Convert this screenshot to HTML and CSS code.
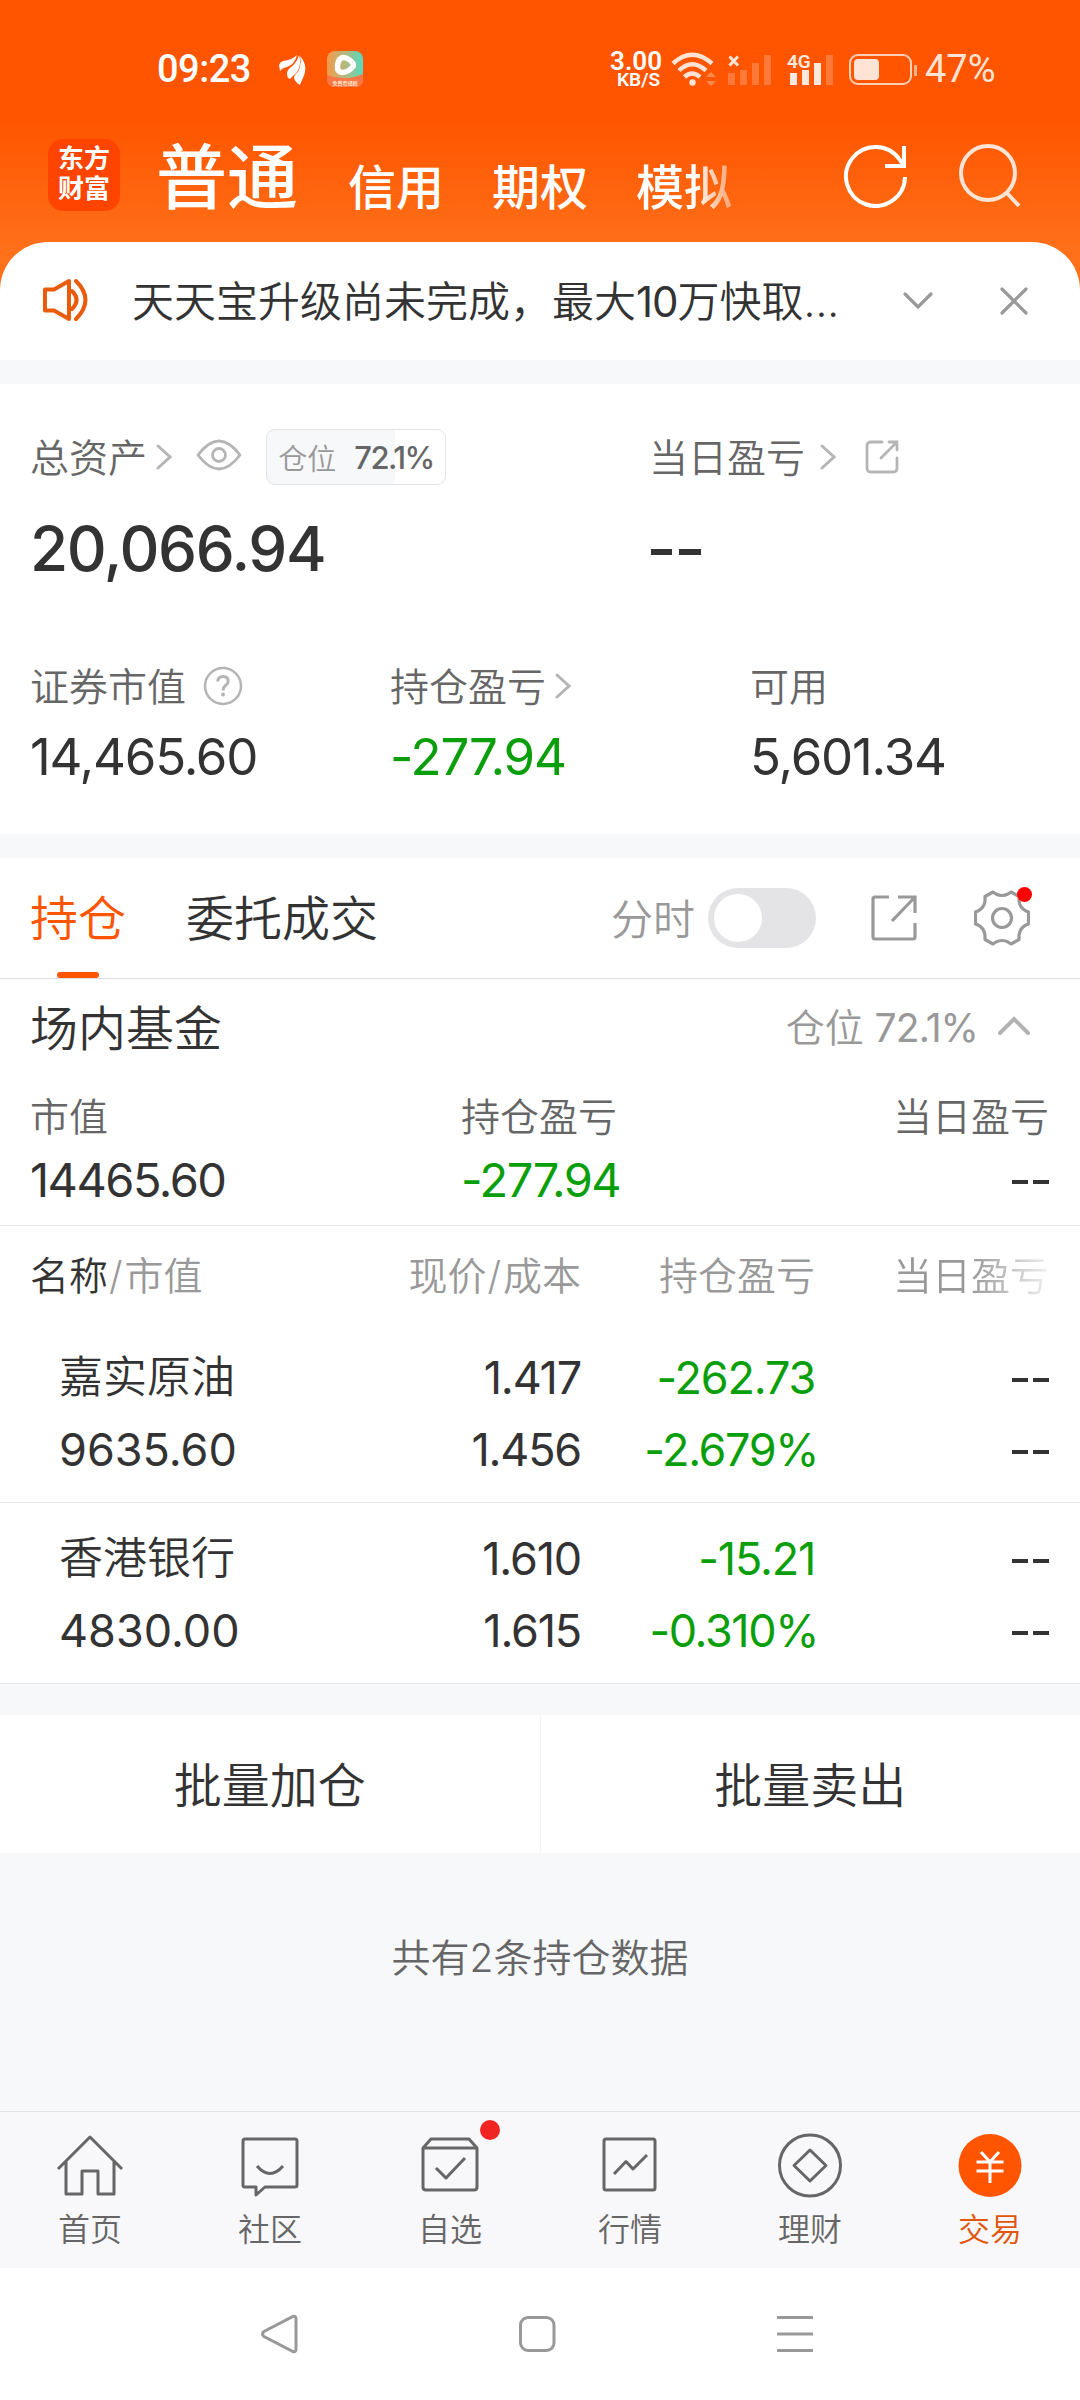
FILE: index.html
```html
<!DOCTYPE html>
<html lang="zh-CN">
<head>
    <meta charset="UTF-8">
    <title>东方财富 - 交易</title>
    <meta name="viewport" content="width=device-width, initial-scale=1.0">
    <link rel="stylesheet" href="styles.css">
</head>
<body>
    <!-- Orange header -->
    <header class="header">
        <div class="status-bar">
            <span class="clock">09:23</span>
            <svg class="wing" width="28" height="32" viewBox="0 0 28 32" fill="#fff">
                <path d="M0 12Q1 9 4 8Q13 7 18 2Q16 11 8 14Q3 15 1 18Z"/>
                <path d="M8 21Q8 17 11 15Q18 10 20 2Q23 12 18 19Q15 22 11 26Q8 25 8 21Z"/>
                <path d="M15 25Q15 22 19 19Q23 12 21 3Q30 13 24 25Q22 29 21 32Q16 29 15 25Z"/>
            </svg>
            <svg class="player" width="36" height="36" viewBox="0 0 36 36">
                <defs>
                    <linearGradient id="play" x1="0" y1="0" x2="1" y2="0">
                        <stop offset="0" stop-color="#f59a4a"/>
                        <stop offset=".5" stop-color="#b3b97e"/>
                        <stop offset="1" stop-color="#55dcc0"/>
                    </linearGradient>
                </defs>
                <rect width="36" height="36" rx="8" fill="url(#play)"/>
                <path d="M0 24Q18 31 36 23V28Q36 36 28 36H8Q0 36 0 28Z" fill="#fb7646"/>
                <path d="M13 8Q16 5 21 8Q28 12 26 15.500Q22 21 15 21.500Q10 21 10.500 15Q11 10 13 8Z" fill="none" stroke="#fff" stroke-width="5.500"/>
                <text x="18" y="34" class="player-text">免费看短剧</text>
            </svg>
            <div class="net-speed"><b>3.00</b><span>KB/S</span></div>
            <svg class="signals" width="240" height="40" viewBox="672 48 240 40">
                <g fill="none" stroke="#ffe4d6" stroke-width="4.500">
                    <path d="M674 62.500Q693 45 713 62.500"/>
                    <path d="M680 69.500Q693 57 707 69.500"/>
                    <path d="M685.500 76Q693 69 701 76"/>
                </g>
                <circle cx="693.500" cy="81.500" r="3.200" fill="#ffe4d6"/>
                <path d="M707 76L712 71L717 76ZM707 80L712 85L717 80Z" fill="#ff8a50"/>
                <path d="M730.500 55.500L739 64.500M739 55.500L730.500 64.500" stroke="#ffe4d6" stroke-width="3"/>
                <path d="M729 72h7v12h-7zM741 69h7v15h-7zM753 62h7v22h-7zM765 54h7v30h-7zM827 54h7v30h-7z" fill="#ff7a39"/>
                <path d="M791 72h7v12h-7zM803 69h7v15h-7zM815 62h7v22h-7z" fill="#ffe9de"/>
                <text x="788" y="67" class="net-type">4G</text>
                <rect x="851" y="54" width="61" height="29" rx="8" fill="none" stroke="#ffcfb5" stroke-width="2"/>
                <rect x="855" y="58" width="25" height="21" rx="4" fill="#ffe4d6"/>
            </svg>
            <i class="battery-tip"></i>
            <span class="battery">47%</span>
        </div>
        <div class="top-nav">
            <div class="logo">东方<br>财富</div>
            <span class="account active">普通</span>
            <span class="account">信用</span>
            <span class="account">期权</span>
            <span class="account fade">模拟</span>
            <svg class="refresh" width="64" height="66" viewBox="0 0 64 66" fill="none" stroke="#fff" stroke-width="4">
                <path d="M61 35A29.500 29.500 0 1 1 56 18L60 24"/>
                <path d="M60 4V24H41"/>
            </svg>
            <svg class="search" width="64" height="66" viewBox="0 0 64 66" fill="none" stroke="#ffe4d6" stroke-width="4">
                <circle cx="30" cy="31" r="27"/>
                <path d="M48 50L61 64"/>
            </svg>
        </div>
    </header>

    <!-- Notice -->
    <div class="notice">
        <svg class="speaker" width="48" height="44" viewBox="0 0 48 44" fill="none" stroke="#ea5b0c" stroke-width="4">
            <path d="M3 11.500H12L27 3V41L12 32.500H3Z" stroke-linejoin="round"/>
            <path d="M30 13Q39 22 30 31M34 3Q53 22 34 41" stroke-linecap="round"/>
        </svg>
        <span class="notice-text">天天宝升级尚未完成，最大<b>10</b>万快取...</span>
        <svg class="notice-down" width="32" height="20" viewBox="0 0 32 20" fill="none" stroke="#999" stroke-width="3.200" stroke-linecap="round">
            <path d="M3 3L16 16L29 3"/>
        </svg>
        <svg width="28" height="28" viewBox="0 0 28 28" fill="none" stroke="#999" stroke-width="3.200" stroke-linecap="round">
            <path d="M2 2L26 26M26 2L2 26"/>
        </svg>
    </div>

    <!-- Assets -->
    <section class="assets">
        <div class="assets-top">
            <div class="asset-main">
                <div class="label">
                    <span>总资产</span>
                    <svg class="arrow" width="16" height="26" viewBox="0 0 16 26"><path d="M2 2L14 13L2 24"/></svg>
                    <svg class="eye" width="46" height="32" viewBox="0 0 46 32" fill="none" stroke="#b5b5b5" stroke-width="2.800">
                        <path d="M2 16Q23 -12 44 16Q23 44 2 16Z" stroke-linejoin="round"/>
                        <circle cx="23" cy="16" r="6.500"/>
                    </svg>
                    <div class="badge">仓位<b>72.1%</b></div>
                </div>
                <div class="total">20,066.94</div>
            </div>
            <div>
                <div class="label">
                    <span>当日盈亏</span>
                    <svg class="arrow wide" width="16" height="26" viewBox="0 0 16 26"><path d="M2 2L14 13L2 24"/></svg>
                    <svg class="share" width="34" height="34" viewBox="0 0 34 34" fill="none" stroke="#b5b5b5" stroke-width="2.800" stroke-linecap="round">
                        <path d="M17 2H6Q2 2 2 6V28Q2 32 6 32H28Q32 32 32 28V18M24 2H32V10M32 2L16 18"/>
                    </svg>
                </div>
                <div class="dash big"></div>
            </div>
        </div>
        <div class="assets-cols">
            <div>
                <div class="label">
                    <span>证券市值</span>
                    <svg class="help" width="40" height="40" viewBox="0 0 40 40" fill="none" stroke="#b5b5b5" stroke-width="2.500">
                        <circle cx="20" cy="20" r="18"/>
                        <path d="M14.800 15.500Q15 10.500 20 10.500Q25.200 10.500 25.200 15Q25.200 17.500 22.500 19.500Q20 21.500 20 24.500" stroke-width="3"/>
                        <circle cx="20" cy="28.500" r="2" fill="#b5b5b5" stroke="none"/>
                    </svg>
                </div>
                <div class="amount">14,465.60</div>
            </div>
            <div>
                <div class="label">
                    <span>持仓盈亏</span>
                    <svg class="arrow" width="16" height="26" viewBox="0 0 16 26"><path d="M2 2L14 13L2 24"/></svg>
                </div>
                <div class="amount green">-277.94</div>
            </div>
            <div>
                <div class="label"><span>可用</span></div>
                <div class="amount">5,601.34</div>
            </div>
        </div>
    </section>

    <!-- Holdings -->
    <section class="holdings">
        <div class="tabs">
            <span class="tab active">持仓</span>
            <span class="tab">委托成交</span>
            <span class="minute">分时</span>
            <span class="switch"></span>
            <svg class="export" width="46" height="46" viewBox="0 0 46 46" fill="none" stroke="#999" stroke-width="3.200">
                <path d="M18 2H4Q2 2 2 4V42Q2 44 4 44H42Q44 44 44 42V28M27 2H44V18M44 2L21 26"/>
            </svg>
            <span class="gear">
                <svg width="56" height="56" viewBox="0 0 56 56" fill="none" stroke="#999" stroke-width="3.200" stroke-linejoin="round">
                    <path d="M19 2L22 4Q28 7 34 4L37 2L45 6.500V11Q46 18 52 21L54.500 22V34L52 35Q46 38 45 45V49.500L37 54L34 52Q28 49 22 52L19 54L11 49.500V45Q10 38 4 35L1.500 34V22L4 21Q10 18 11 11V6.500Z"/>
                    <circle cx="28" cy="28" r="9.500"/>
                </svg>
                <i class="dot"></i>
            </span>
        </div>

        <div class="group">
            <div class="group-title">
                <span>场内基金</span>
                <span class="ratio">仓位 <b>72.1%</b></span>
                <svg width="34" height="20" viewBox="0 0 34 20" fill="none" stroke="#b3b3b3" stroke-width="4" stroke-linecap="round">
                    <path d="M3 17L17 3L31 17"/>
                </svg>
            </div>
            <div class="group-cols">
                <div><p>市值</p><b>14465.60</b></div>
                <div><p>持仓盈亏</p><b class="green">-277.94</b></div>
                <div><p>当日盈亏</p><i class="dash"></i></div>
            </div>
        </div>

        <div class="row head">
            <span><em>名称</em><i>/</i>市值</span>
            <span>现价<i>/</i>成本</span>
            <span>持仓盈亏</span>
            <span class="fade">当日盈亏</span>
        </div>
        <div class="row stock">
            <div><p class="name">嘉实原油</p><p>9635.60</p></div>
            <div><p>1.417</p><p>1.456</p></div>
            <div class="green"><p>-262.73</p><p class="rate">-2.679%</p></div>
            <div><p><i class="dash"></i></p><p><i class="dash"></i></p></div>
        </div>
        <div class="row stock">
            <div><p class="name">香港银行</p><p>4830.00</p></div>
            <div><p>1.610</p><p>1.615</p></div>
            <div class="green"><p>-15.21</p><p class="rate">-0.310%</p></div>
            <div><p><i class="dash"></i></p><p><i class="dash"></i></p></div>
        </div>
    </section>

    <div class="batch">
        <button>批量加仓</button>
        <button>批量卖出</button>
    </div>
    <p class="count">共有2条持仓数据</p>

    <!-- Bottom tab bar -->
    <nav class="tab-bar">
        <a>
            <svg width="68" height="68" viewBox="0 0 68 68">
                <path d="M2 37L34 5L66 37M10 30V62H26V39H42V62H58V30" />
            </svg>
            首页
        </a>
        <a>
            <svg width="68" height="68" viewBox="0 0 68 68">
                <path d="M9 7H59Q61 7 61 9V53Q61 55 59 55H29L20 63V55H9Q7 55 7 53V9Q7 7 9 7ZM21 34Q34 49 47 34"/>
            </svg>
            社区
        </a>
        <a>
            <svg width="68" height="68" viewBox="0 0 68 68">
                <path d="M7 16L15 7H53L61 16V55Q61 58 58 58H10Q7 58 7 55ZM7 16H61M20 36L30 46L49 26"/>
            </svg>
            自选
            <i class="dot"></i>
        </a>
        <a>
            <svg width="68" height="68" viewBox="0 0 68 68">
                <rect x="8" y="7" width="51" height="51" rx="2"/>
                <path d="M18 42L30 29.500L37 37L51 23"/>
            </svg>
            行情
        </a>
        <a>
            <svg width="68" height="68" viewBox="0 0 68 68">
                <circle cx="34" cy="33.500" r="30.500"/>
                <path d="M34 18L50 33.500L34 49L18 33.500Z"/>
            </svg>
            理财
        </a>
        <a class="active">
            <svg width="68" height="68" viewBox="0 0 68 68">
                <circle class="coin" cx="34" cy="33.500" r="31.500"/>
                <path class="yen" d="M25 20L34 30L43 20M34 30V51M20.500 30H47.500M20.500 39H47.500"/>
            </svg>
            交易
        </a>
    </nav>

    <!-- System keys -->
    <div class="sys-nav">
        <svg width="40" height="40" viewBox="0 0 40 40"><path d="M34 2.500Q37 1.500 37 5V35Q37 38.500 34 37.500L5 22.500Q2 20 5 17.500Z"/></svg>
        <svg width="40" height="40" viewBox="0 0 40 40"><rect x="3.500" y="3.500" width="33.500" height="33" rx="7.500"/></svg>
        <svg width="40" height="40" viewBox="0 0 40 40"><path d="M2 3.500H38M2 20H38M2 36.500H38"/></svg>
    </div>
</body>
</html>
```
FILE: styles.css
```css
:root {
    --orange: #ff5500;
    --text: #333;
    --gray: #666;
    --light: #999;
    --green: #0a9f0a;
    --bg: #f7f8fa;
}

* {
    box-sizing: border-box;
    margin: 0;
    padding: 0;
}

body {
    width: 1080px;
    height: 2400px;
    overflow: hidden;
    background: var(--bg);
    color: var(--text);
    font-family: Inter, "Noto Sans CJK SC", sans-serif;
    font-weight: 350;
    display: flex;
    flex-direction: column;
}

svg {
    display: block;
    flex: none;
}

b, i, em {
    font-weight: inherit;
    font-style: normal;
}

.green {
    color: var(--green);
}

/* header */
.header {
    height: 290px;
    background: linear-gradient(#ff5500 0, #ff5500 120px, #ff7019 250px, #ff7019 100%);
    color: white;
}

.status-bar {
    height: 110px;
    padding: 28px 0 0 157px;
    display: flex;
    align-items: center;
    font-family: Roboto, sans-serif;
}

.clock {
    width: 94px;
    font-size: 38px;
    font-weight: 500;
    letter-spacing: -0.5px;
    white-space: nowrap;
}

.wing {
    margin-left: 28px;
}

.player {
    margin-left: 20px;
}

.player-text {
    font: 700 5px "Noto Sans CJK SC", sans-serif;
    fill: #ffe0c0;
    text-anchor: middle;
}

.net-speed {
    width: 54px;
    margin-left: 245px;
    display: flex;
    flex-direction: column;
    align-items: flex-end;
    font-size: 19px;
    font-weight: 600;
    line-height: 16px;
}

.net-speed b {
    font-size: 26px;
    line-height: 22px;
}

.net-speed span {
    padding-right: 2px;
}

.signals {
    margin-left: 9px;
    overflow: visible;
}

.net-type {
    font: 600 19px Roboto, sans-serif;
    fill: #ffe9de;
}

.battery-tip {
    width: 3px;
    height: 11px;
    margin: 2px 8px 0 3px;
    background: #ffb38a;
}

.battery {
    font-size: 38px;
    font-weight: 400;
    color: #ffe4d6;
}

.top-nav {
    height: 132px;
    padding-left: 48px;
    display: flex;
    align-items: center;
}

.logo {
    width: 72px;
    height: 72px;
    margin: -3px 36px 0 0;
    padding-top: 5px;
    border-radius: 15px;
    background: #ff4400;
    font-size: 26px;
    font-weight: 700;
    line-height: 30px;
    text-align: center;
}

.account {
    margin: 24px 48px 0 0;
    font-size: 48px;
    font-weight: 500;
    line-height: 60px;
}

.account.active {
    margin: 2px 50px 0 0;
    font-size: 71px;
    line-height: 80px;
}

.fade {
    -webkit-mask-image: linear-gradient(90deg, #000 50%, rgba(0, 0, 0, 0.15));
    mask-image: linear-gradient(90deg, #000 50%, rgba(0, 0, 0, 0.15));
}

.account.fade {
    -webkit-mask-image: linear-gradient(90deg, #000 60%, rgba(0, 0, 0, 0.4));
    mask-image: linear-gradient(90deg, #000 60%, rgba(0, 0, 0, 0.4));
}

.refresh {
    margin: -2px 0 0 auto;
}

.search {
    margin: -2px 58px 0 50px;
}

/* notice */
.notice {
    height: 118px;
    margin-top: -48px;
    padding: 0 52px 0 42px;
    border-radius: 48px 48px 0 0;
    background: white;
    display: flex;
    align-items: center;
}

.speaker {
    margin-top: -3px;
}

.notice-text {
    margin: -5px 0 0 42px;
    font-size: 42px;
    white-space: nowrap;
}

.notice-text b {
    font-weight: 400;
    letter-spacing: -1px;
}

.notice-down {
    margin: 0 66px 0 auto;
}

/* assets */
.assets {
    height: 450px;
    margin-top: 24px;
    padding-top: 45px;
    background: white;
}

.assets-top {
    display: grid;
    grid-template-columns: 619px 1fr;
    padding-left: 30px;
}

.label {
    height: 56px;
    display: flex;
    align-items: center;
    color: var(--gray);
    font-size: 39px;
}

.label span {
    margin-top: -5px;
}

.arrow {
    margin-left: 9px;
    fill: none;
    stroke: #b5b5b5;
    stroke-width: 3;
    stroke-linecap: round;
}

.arrow.wide {
    margin-left: 15px;
}

.eye {
    margin: -4px 0 0 24px;
}

.badge {
    width: 180px;
    height: 56px;
    margin-left: 24px;
    border: 1px solid #e3e3e5;
    border-radius: 9px;
    background: linear-gradient(90deg, var(--bg) 72.1%, white 72.1%);
    display: flex;
    align-items: center;
    justify-content: center;
    gap: 18px;
    color: var(--light);
    font-size: 29px;
}

.badge b {
    color: var(--gray);
    font-size: 31px;
    font-weight: 500;
    letter-spacing: -1.5px;
}

.share {
    margin-left: 29px;
}

.total {
    height: 130px;
    font-size: 62px;
    font-weight: 500;
    line-height: 128px;
    letter-spacing: -1.4px;
}

.dash {
    display: inline-block;
    width: 37px;
    height: 4px;
    background: linear-gradient(90deg, var(--text) 43%, transparent 43%, transparent 57%, var(--text) 57%);
    vertical-align: middle;
}

.dash.big {
    display: block;
    width: 50px;
    height: 6px;
    margin: 64px 0 0 2px;
}

.assets-cols {
    display: grid;
    grid-template-columns: repeat(3, 1fr);
    margin-top: 43px;
}

.assets-cols > div {
    padding-left: 30px;
}

.help {
    margin-left: 17px;
}

.amount {
    font-size: 51px;
    font-weight: 400;
    line-height: 86px;
    letter-spacing: -1.2px;
}

/* holdings */
.holdings {
    margin-top: 24px;
    background: white;
}

.tabs {
    height: 121px;
    padding-left: 30px;
    border-bottom: 1px solid #ddd;
    display: flex;
    align-items: center;
}

.tab {
    height: 120px;
    margin-right: 60px;
    font-size: 48px;
    line-height: 122px;
}

.tab.active {
    color: var(--orange);
    display: flex;
    flex-direction: column;
    align-items: center;
}

.tab.active::after {
    content: "";
    width: 42px;
    height: 6px;
    margin-top: -8px;
    border-radius: 3px;
    background: var(--orange);
}

.minute {
    margin: -3px 0 0 auto;
    color: var(--light);
    font-size: 42px;
}

.switch {
    width: 108px;
    height: 60px;
    margin-left: 13px;
    border-radius: 30px;
    background: #e4e4e6;
}

.switch::before {
    content: "";
    display: block;
    width: 48px;
    height: 48px;
    margin: 6px;
    border-radius: 50%;
    background: white;
}

.export {
    margin-left: 55px;
}

.gear {
    position: relative;
    margin: 0 50px 0 57px;
}

.dot {
    position: absolute;
    border-radius: 50%;
    background: #f00;
}

.gear .dot {
    top: -3px;
    right: -2px;
    width: 15px;
    height: 15px;
}

.group {
    height: 247px;
    padding: 11px 31px 0 30px;
    border-bottom: 1px solid #eaeaea;
}

.group-title {
    height: 70px;
    display: flex;
    align-items: center;
    font-size: 48px;
}

.ratio {
    margin: 0 19px 0 auto;
    color: var(--light);
    font-size: 39px;
}

.ratio b {
    font-weight: 400;
    letter-spacing: -0.9px;
}

.group-title svg {
    margin: 2px 18px 0 0;
}

.group-cols {
    display: grid;
    grid-template-columns: 431px 1fr auto;
    padding-top: 27px;
}

.group-cols p {
    color: var(--gray);
    font-size: 39px;
    line-height: 60px;
}

.group-cols b {
    display: block;
    font-size: 47px;
    font-weight: 400;
    line-height: 66px;
    letter-spacing: -1.5px;
}

.group-cols div:last-child {
    text-align: right;
    line-height: 66px;
}

.row {
    display: grid;
    grid-template-columns: 291px 260px 234px 234px;
    padding: 0 31px 0 30px;
    text-align: right;
}

.row > :first-child {
    text-align: left;
}

.head {
    height: 96px;
    color: var(--light);
    font-size: 39px;
    line-height: 99px;
}

.head em {
    color: var(--text);
}

.head i {
    padding: 0 2px 0 1px;
}

.head .fade {
    justify-self: end;
}

.stock {
    height: 181px;
    padding-top: 20px;
    border-bottom: 1px solid #eaeaea;
    font-size: 45px;
    font-weight: 400;
    line-height: 71px;
    letter-spacing: -1.2px;
}

.stock p {
    height: 72px;
}

.stock > :first-child {
    padding-left: 29px;
    letter-spacing: 0;
}

.stock .dash {
    margin-top: -3px;
}

.name {
    font-size: 44px;
    font-weight: 350;
}

.rate {
    margin-right: -3px;
    letter-spacing: -1.4px;
}

.batch {
    height: 138px;
    margin-top: 31px;
    background: white;
    display: flex;
}

.batch button {
    flex: 1;
    padding-bottom: 5px;
    border: none;
    background: none;
    color: var(--text);
    font: inherit;
    font-size: 48px;
}

.batch button:first-child {
    border-right: 1px solid #f3f3f5;
}

.count {
    padding-top: 75px;
    color: var(--gray);
    font-size: 39px;
    line-height: 60px;
    text-align: center;
}

/* bottom */
.tab-bar {
    height: 157px;
    margin-top: auto;
    border-top: 1px solid #e3e3e5;
    background: #f8f8fa;
    display: flex;
}

.tab-bar a {
    position: relative;
    flex: 1;
    padding-top: 20px;
    display: flex;
    flex-direction: column;
    align-items: center;
    color: var(--gray);
    font-size: 32px;
    line-height: 59px;
}

.tab-bar svg {
    fill: none;
    stroke: var(--gray);
    stroke-width: 3;
    stroke-linejoin: round;
}

.tab-bar .active {
    color: #e0560d;
}

.tab-bar .coin {
    fill: var(--orange);
    stroke: none;
}

.tab-bar .yen {
    stroke: white;
}

.tab-bar .dot {
    top: 8px;
    left: 120px;
    width: 20px;
    height: 20px;
    background: #f12424;
}

.sys-nav {
    height: 132px;
    padding-right: 6px;
    background: white;
    display: flex;
    align-items: center;
    justify-content: center;
    gap: 218px;
}

.sys-nav svg {
    fill: none;
    stroke: #999;
    stroke-width: 3;
}
```
